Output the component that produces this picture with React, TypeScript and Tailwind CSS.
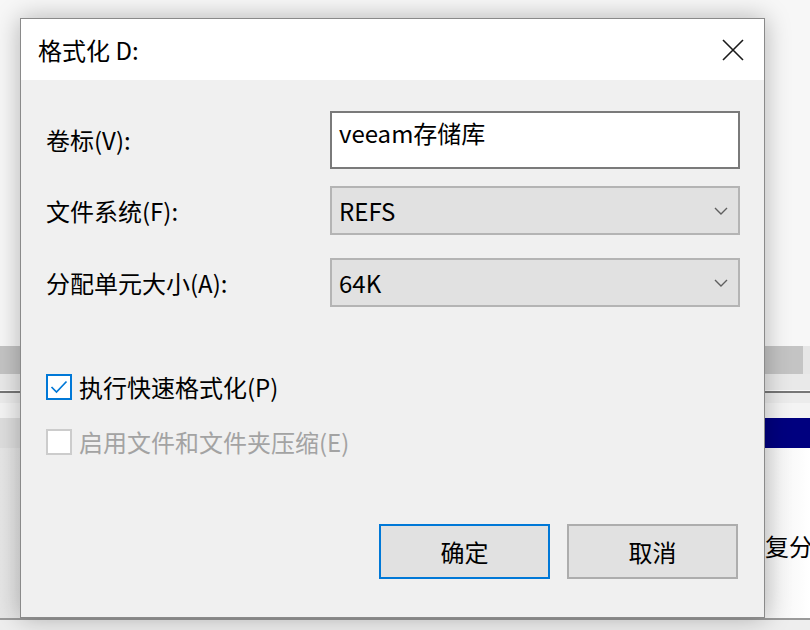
import React from "react";

const font = { fontFamily: '"Noto Sans CJK SC", "Noto Sans", sans-serif' };

function Chevron() {
  return (
    <svg width="14" height="8" viewBox="0 0 14 8" fill="none">
      <path d="M1 1l6 6 6-6" stroke="#5f5f5f" strokeWidth="1.4" />
    </svg>
  );
}

function SelectBox({ value }: { value: string }) {
  return (
    <div className="flex h-[49px] items-center justify-between border-2 border-[#b4b4b4] bg-[#e1e1e1] pl-[7px] pr-[10px]">
      <span className="text-[24px] leading-none text-black">{value}</span>
      <Chevron />
    </div>
  );
}

function Checkbox({ checked, disabled, label }: { checked?: boolean; disabled?: boolean; label: string }) {
  return (
    <div className="flex h-[26px] items-center gap-[7px]">
      <div
        className={
          checked
            ? "flex h-[26px] w-[26px] items-center justify-center border-2 border-[#0078d7] bg-white"
            : "h-[26px] w-[26px] border-2 border-[#cccccc] bg-white"
        }
      >
        {checked && (
          <svg width="18" height="14" viewBox="0 0 18 14" fill="none">
            <path d="M1.5 7l5 5L16.5 1.5" stroke="#0078d7" strokeWidth="1.7" />
          </svg>
        )}
      </div>
      <span className={disabled ? "text-[24px] leading-none text-[#a3a3a3]" : "text-[24px] leading-none text-black"}>
        {label}
      </span>
    </div>
  );
}

export default function App() {
  return (
    <div className="relative h-[630px] w-[810px] overflow-hidden bg-[#f7f7f7]" style={font}>
      {/* window behind the dialog */}
      <div className="flex h-full flex-col">
        <div className="h-[346px] bg-[#f7f7f7]" />
        <div className="flex h-[28px]">
          <div className="flex-1 bg-[#c4c4c4]" />
          <div className="w-[7px] bg-[#e6e6e6]" />
        </div>
        <div className="h-[17px] border-b border-[#fafafa] bg-[#e9e9e9]" />
        <div className="h-[2px] bg-[#777777]" />
        <div className="h-[25px] border-t-[10px] border-[#ececec] bg-[#f4f4f4]" />
        <div className="flex h-[30px]">
          <div className="w-[400px] bg-[#dedede]" />
          <div className="flex-1 bg-[#00007f]" />
        </div>
        <div className="flex h-[170px]">
          <div className="w-[765px] bg-gradient-to-r from-[#e6e6e6] to-[#dadada]" />
          <div className="flex-1 overflow-hidden bg-gradient-to-r from-[#f2f2f2] to-white pt-[86px]">
            <span className="whitespace-nowrap text-[24px] leading-none text-black">复分</span>
          </div>
        </div>
        <div className="h-[2px] bg-[#9a9a9a]" />
        <div className="flex-1 bg-[#eeeeee]" />
      </div>

      {/* dialog */}
      <div className="absolute left-[20px] top-[18px] flex h-[600px] w-[745px] flex-col border border-[#8a8a8a] shadow-[0_0_24px_rgba(0,0,0,0.28)]">
        <div className="flex h-[61px] items-center justify-between bg-white pl-[17px] pr-[20px]">
          <span className="text-[24px] leading-none text-black">格式化 D:</span>
          <svg width="22" height="22" viewBox="0 0 22 22" fill="none">
            <path d="M1 1l20 20M21 1L1 21" stroke="#1a1a1a" strokeWidth="1.6" />
          </svg>
        </div>

        <div className="flex flex-1 flex-col bg-[#f0f0f0] pl-[25px] pr-[24px] pt-[31px]">
          <div className="grid grid-cols-[284px_1fr] items-center gap-y-[17px]">
            <span className="text-[24px] leading-none text-black">卷标(V):</span>
            <div className="h-[58px] border-2 border-[#7a7a7a] bg-white pl-[7px] pt-[8px]">
              <span className="text-[24px] leading-none text-black">veeam存储库</span>
            </div>
            <span className="text-[24px] leading-none text-black">文件系统(F):</span>
            <SelectBox value="REFS" />
            <span className="mt-[6px] text-[24px] leading-none text-black">分配单元大小(A):</span>
            <div className="mt-[6px]">
              <SelectBox value="64K" />
            </div>
          </div>

          <div className="mt-[67px] flex flex-col gap-[29px]">
            <Checkbox checked label="执行快速格式化(P)" />
            <Checkbox disabled label="启用文件和文件夹压缩(E)" />
          </div>

          <div className="mt-[69px] flex justify-end gap-[17px] pr-[2px]">
            <button className="flex h-[55px] w-[171px] items-center justify-center border-2 border-[#0078d7] bg-[#e1e1e1] text-[24px] leading-none text-black">
              确定
            </button>
            <button className="flex h-[55px] w-[171px] items-center justify-center border-2 border-[#adadad] bg-[#e1e1e1] text-[24px] leading-none text-black">
              取消
            </button>
          </div>
        </div>
      </div>
    </div>
  );
}
